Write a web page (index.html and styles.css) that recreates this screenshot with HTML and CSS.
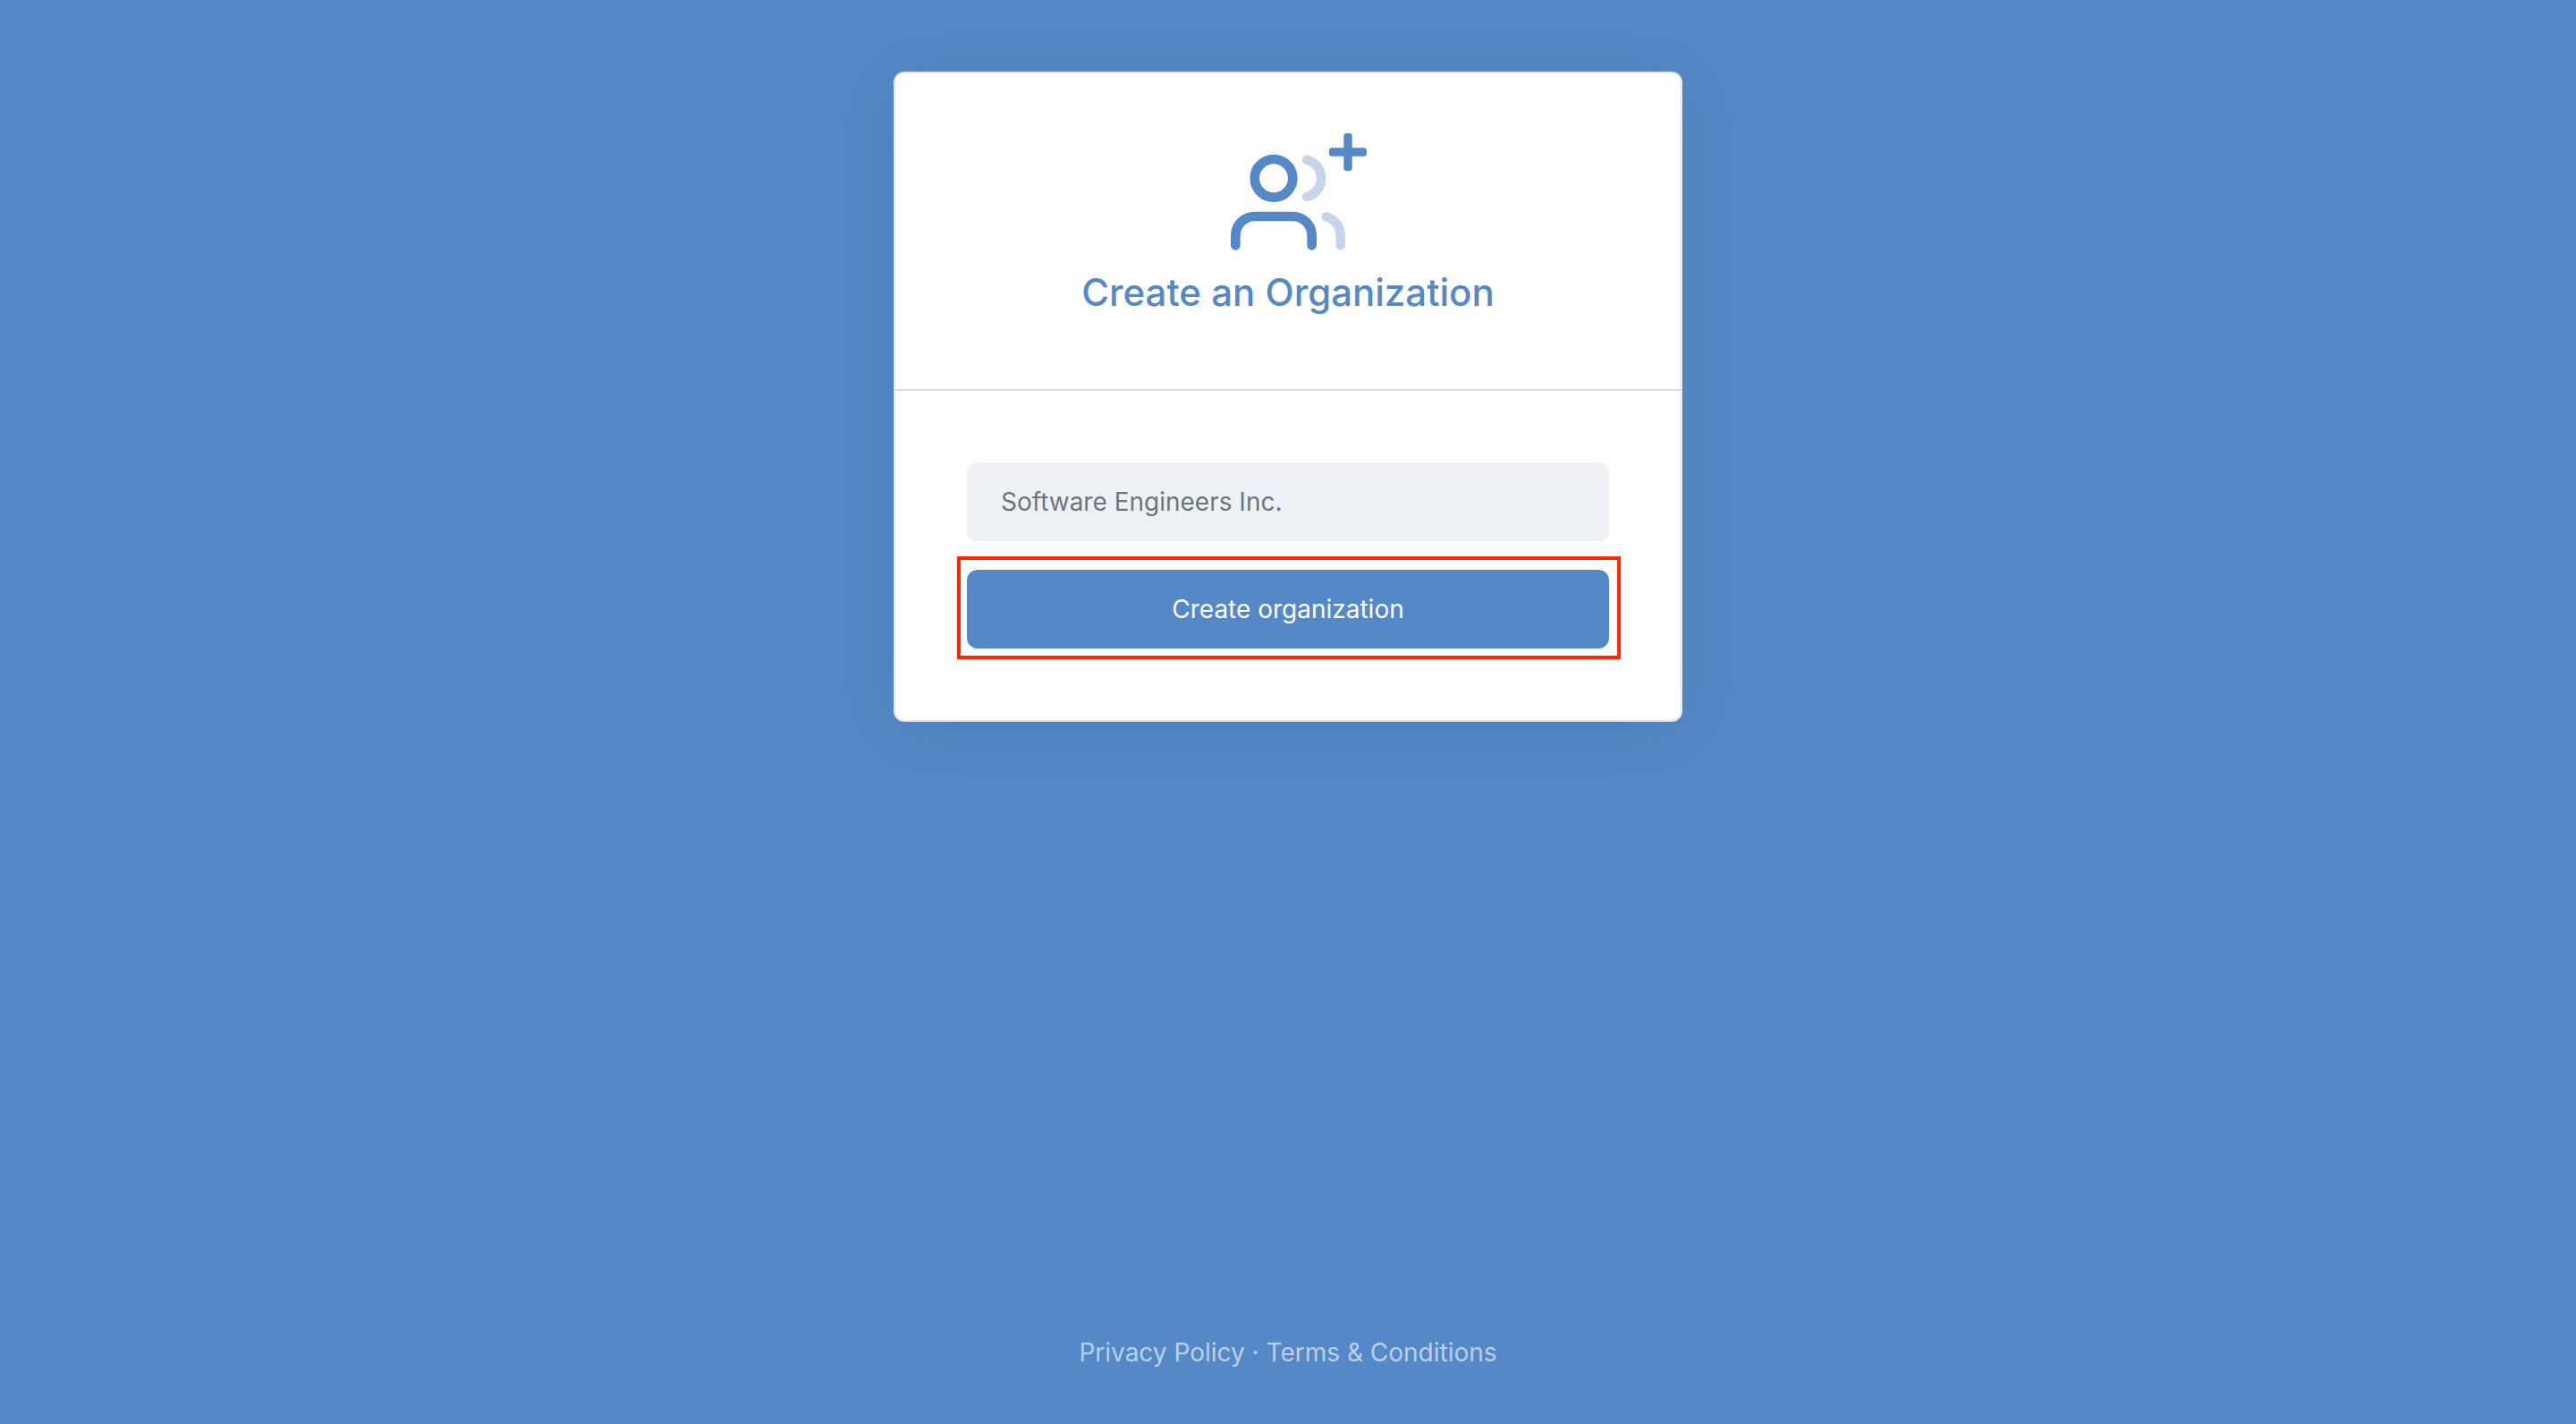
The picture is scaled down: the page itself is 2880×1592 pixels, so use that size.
FILE: index.html
```html
<!DOCTYPE html>
<html lang="en">
<head>
  <meta charset="utf-8">
  <meta name="viewport" content="width=device-width, initial-scale=1">
  <title>Create an Organization</title>
  <link rel="stylesheet" href="styles.css">
</head>
<body class="page">
  <main class="card">
    <header class="card-header">
      <svg class="card-icon" viewBox="0 0 200 132" fill="none" stroke-width="10.67" stroke-linecap="round" aria-hidden="true">
        <g class="icon-back">
          <path d="M121 30.7A21.3 21.3 0 0 1 121 72"/>
          <path d="M142.7 94.3A21.3 21.3 0 0 1 158.7 115V126.3"/>
        </g>
        <g class="icon-front">
          <circle cx="84" cy="51.3" r="21.3"/>
          <path d="M41.3 126.3V115.3A21.3 21.3 0 0 1 62.6 94H105.4A21.3 21.3 0 0 1 126.7 115.3V126.3"/>
        </g>
        <g class="icon-plus">
          <rect x="146" y="17.3" width="42" height="9.4" rx="3"/>
          <rect x="162.3" y="1" width="9.4" height="42" rx="3"/>
        </g>
      </svg>
      <h1 class="card-title">Create an Organization</h1>
    </header>
    <form class="card-form">
      <input class="field" type="text" value="Software Engineers Inc." aria-label="Organization name">
      <div class="action">
        <button class="submit" type="submit">Create organization</button>
        <span class="highlight"></span>
      </div>
    </form>
  </main>
  <footer class="footer">
    <a href="#">Privacy Policy</a> · <a href="#">Terms &amp; Conditions</a>
  </footer>
</body>
</html>
```
FILE: styles.css
```css
* {
  box-sizing: border-box;
}

.page {
  display: flex;
  flex-direction: column;
  align-items: center;
  justify-content: space-between;
  min-height: 100vh;
  margin: 0;
  padding: 80px 32px 60px;
  background: #5488c7;
  font-family: Inter, "Liberation Sans", sans-serif;
  font-size: 28px;
  line-height: 40px;
}

.card {
  width: 100%;
  max-width: 882px;
  border: 2px solid #e2e4e6;
  border-radius: 12px;
  background: #fff;
  box-shadow: 0 8px 72px rgba(48, 49, 51, 0.11);
}

.card-header {
  display: flex;
  flex-direction: column;
  align-items: center;
  gap: 23px;
  padding: 66px 80px 85px;
  border-bottom: 2px solid #d8dde1;
}

.card-icon {
  width: 200px;
  height: 132px;
}

.icon-back {
  stroke: #c5d5ec;
}

.icon-front {
  stroke: #5488c7;
}

.icon-plus {
  fill: #5488c7;
}

.card-title {
  margin: 0;
  color: #5488c7;
  font-size: 42px;
  font-weight: 500;
  line-height: 47px;
}

.card-form {
  display: flex;
  flex-direction: column;
  gap: 32px;
  padding: 80px;
}

.field,
.submit {
  display: block;
  width: 100%;
  height: 88px;
  border: 0;
  border-radius: 12px;
  font: inherit;
}

.field {
  padding: 0 38px;
  background: #edf1f6;
  color: #6c757d;
}

.action {
  position: relative;
}

.submit {
  background: #5488c7;
  color: #fff;
}

.highlight {
  position: absolute;
  inset: -15px -13px -12px -11px;
  border: 4px solid #ff2600;
  pointer-events: none;
}

.footer {
  color: #bbcfe9;
}

.footer a {
  color: inherit;
  text-decoration: none;
}
```
